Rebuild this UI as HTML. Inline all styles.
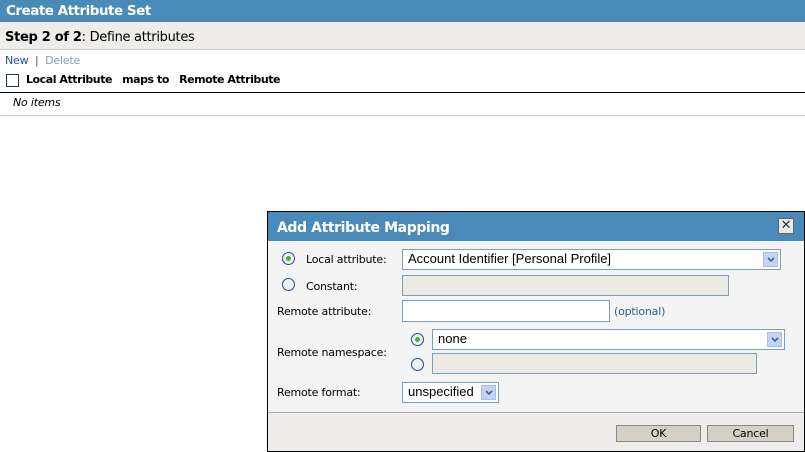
<!DOCTYPE html>
<html><head><style>
body{margin:0;width:805px;height:452px;background:#fff;font-family:"DejaVu Sans","Liberation Sans",sans-serif;font-size:11px;color:#000;position:relative;overflow:hidden;letter-spacing:-0.2px}
.a{position:absolute}
.inp{position:absolute;box-sizing:border-box;border:1px solid #7f9db9;background:#fff;font-family:"Liberation Sans",sans-serif;font-size:13px;padding-left:5px;line-height:18px;letter-spacing:0}
.dis{background:#ebeae4}
.dd{position:absolute;right:2px;top:2px;width:15px;height:15px;background:#c3d3f5;border:1px solid #a9bde8;box-sizing:border-box}
.dd svg{position:absolute;left:3px;top:4px}
.rad{position:absolute;width:11px;height:11px;border:1px solid #1c5180;border-radius:50%;background:#f0f0f0}
.rad.on::after{content:"";position:absolute;left:3px;top:3px;width:5px;height:5px;border-radius:50%;background:#3fb03f}
.btn{position:absolute;box-sizing:border-box;background:#d4d0c8;border:1px solid #888;text-align:center;font-size:11px;line-height:15px}
</style></head><body>
<div class="a" style="left:0;top:0;width:805px;height:22px;background:#4a8ab8;color:#fff;font-weight:bold;font-size:13.5px;letter-spacing:-0.5px;line-height:22px;padding-left:6px;box-sizing:border-box">Create Attribute Set</div>
<div class="a" style="left:0;top:22px;width:805px;height:28px;background:#eeedeb;border-bottom:1px solid #ccc;font-size:13px;line-height:31px;padding-left:5px;box-sizing:border-box;letter-spacing:-0.3px"><b>Step 2 of 2</b>: Define attributes</div>
<div class="a" style="left:5px;top:54px;line-height:14px"><span style="color:#1f4e9a">New</span> <span style="color:#555">&nbsp;|&nbsp;</span> <span style="color:#8a9bb0">Delete</span></div>
<div class="a" style="left:6px;top:74px;width:11px;height:11px;border:1px solid #1c3a5a;background:#fff"></div>
<div class="a" style="left:26px;top:73px;font-weight:bold;line-height:14px;letter-spacing:-0.45px">Local Attribute &nbsp;&nbsp;maps to &nbsp;&nbsp;Remote Attribute</div>
<div class="a" style="left:0;top:92px;width:805px;height:1px;background:#000"></div>
<div class="a" style="left:13px;top:96px;font-style:italic;line-height:14px">No items</div>
<div class="a" style="left:0;top:115px;width:805px;height:1px;background:#ccc"></div>

<div class="a" style="left:267px;top:211px;width:538px;height:241px;box-sizing:border-box;border:1px solid #000;background:#f4f4f4">
 <div class="a" style="left:0;top:0;width:536px;height:29px;background:#4a8ab8;color:#fff;font-weight:bold;font-size:14px;letter-spacing:-0.4px;line-height:32px;padding-left:9px;box-sizing:border-box">Add Attribute Mapping</div>
 <div class="a" style="left:510px;top:6px;width:16px;height:16px;background:#e8e8e8;border:1px solid #666;box-sizing:border-box;text-align:center;line-height:14px;font-size:13px;color:#333">✕</div>
 <div class="a" style="left:0;top:200px;width:536px;height:38px;background:#eeedeb;border-top:1px solid #aaa"></div>
</div>
<div class="rad on" style="left:282px;top:252px"></div>
<div class="a" style="left:306px;top:253px">Local attribute:</div>
<div class="inp" style="left:402px;top:249px;width:379px;height:21px">Account Identifier [Personal Profile]<div class="dd"><svg width="8" height="6"><path d="M1 1L4 4L7 1" stroke="#4d6185" stroke-width="1.6" fill="none"/></svg></div></div>
<div class="rad" style="left:282px;top:278px"></div>
<div class="a" style="left:306px;top:280px">Constant:</div>
<div class="inp dis" style="left:402px;top:275px;width:327px;height:21px"></div>
<div class="a" style="left:277px;top:305px">Remote attribute:</div>
<div class="inp" style="left:402px;top:300px;width:208px;height:22px"></div>
<div class="a" style="left:614px;top:305px;color:#2d5d8f">(optional)</div>
<div class="rad on" style="left:411px;top:333px"></div>
<div class="inp" style="left:432px;top:329px;width:353px;height:21px">none<div class="dd"><svg width="8" height="6"><path d="M1 1L4 4L7 1" stroke="#4d6185" stroke-width="1.6" fill="none"/></svg></div></div>
<div class="a" style="left:277px;top:346px">Remote namespace:</div>
<div class="rad" style="left:411px;top:358px"></div>
<div class="inp dis" style="left:432px;top:353px;width:325px;height:21px"></div>
<div class="a" style="left:277px;top:386px">Remote format:</div>
<div class="inp" style="left:402px;top:382px;width:97px;height:21px">unspecified<div class="dd"><svg width="8" height="6"><path d="M1 1L4 4L7 1" stroke="#4d6185" stroke-width="1.6" fill="none"/></svg></div></div>
<div class="btn" style="left:616px;top:425px;width:85px;height:17px">OK</div>
<div class="btn" style="left:707px;top:425px;width:87px;height:17px">Cancel</div>
</body></html>
